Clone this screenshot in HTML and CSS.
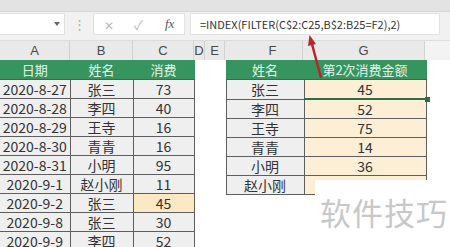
FILE: index.html
```html
<!DOCTYPE html>
<html>
<head>
  <meta charset="utf-8">
  <link rel="stylesheet" href="styles.css">
</head>
<body>
  <div class="topbar"></div>

  <div class="formula-bar">
    <div class="name-box"><span class="drop"></span></div>
    <div class="sep">⋮</div>
    <div class="fn-box">
      <span class="btn-x">✕</span>
      <span class="btn-ok">✓</span>
      <span class="btn-fx">fx</span>
    </div>
    <div class="formula">=INDEX(FILTER(C$2:C25,B$2:B25=F2),2)</div>
  </div>

  <div class="col-heads">
    <div>A</div>
    <div>B</div>
    <div>C</div>
    <div>D</div>
    <div>E</div>
    <div class="head-f">F</div>
    <div>G</div>
    <div class="head-rest"></div>
  </div>

  <div class="sheet">
    <table class="tbl left">
      <colgroup><col class="col-a"><col class="col-b"><col class="col-c"></colgroup>
      <tr class="head"><td>日期</td><td>姓名</td><td>消费</td></tr>
      <tr><td>2020-8-27</td><td>张三</td><td>73</td></tr>
      <tr><td>2020-8-28</td><td>李四</td><td>40</td></tr>
      <tr><td>2020-8-29</td><td>王寺</td><td>16</td></tr>
      <tr><td>2020-8-30</td><td>青青</td><td>16</td></tr>
      <tr><td>2020-8-31</td><td>小明</td><td>95</td></tr>
      <tr><td>2020-9-1</td><td>赵小刚</td><td>11</td></tr>
      <tr><td>2020-9-2</td><td>张三</td><td class="hit">45</td></tr>
      <tr><td>2020-9-8</td><td>张三</td><td>30</td></tr>
      <tr><td>2020-9-9</td><td>李四</td><td>52</td></tr>
    </table>

    <div class="spacer"></div>

    <table class="tbl right">
      <colgroup><col class="col-f"><col class="col-g"></colgroup>
      <tr class="head"><td>姓名</td><td>第2次消费金额</td></tr>
      <tr><td>张三</td><td class="amt selected">45<span class="handle"></span></td></tr>
      <tr><td>李四</td><td class="amt">52</td></tr>
      <tr><td>王寺</td><td class="amt">75</td></tr>
      <tr><td>青青</td><td class="amt">14</td></tr>
      <tr><td>小明</td><td class="amt">36</td></tr>
      <tr><td>赵小刚</td><td class="amt"></td></tr>
    </table>
  </div>

  <!-- red pointer drawn on top of the screenshot -->
  <svg class="arrow" width="450" height="247" viewBox="0 0 450 247">
    <line x1="321" y1="78" x2="312" y2="44" stroke="#b8262b" stroke-width="2.5"/>
    <polygon points="309.5,35 316,44 308,46" fill="#b8262b"/>
  </svg>

  <div class="watermark">软件技巧</div>
</body>
</html>
```

FILE: styles.css
```css
* {
  margin: 0;
  padding: 0;
  box-sizing: border-box;
}

body {
  width: 450px;
  height: 247px;
  overflow: hidden;
  position: relative;
  background-color: white;
  font-family: "Noto Sans CJK SC", "Noto Sans", sans-serif;
  color: #333;
}

.topbar {
  height: 12px;
  background-color: #e3e3e3;
  border-bottom: 1px solid #d6d6d6;
}

.formula-bar {
  height: 28px;
  display: flex;
  align-items: flex-start;
  padding-top: 1px;
  background-color: #f1f1f1;
}

.name-box {
  width: 65px;
  height: 22px;
  background-color: white;
  border: 1px solid #e2e2e2;
  border-left: none;
  position: relative;
}

.drop {
  position: absolute;
  left: 54px;
  top: 8px;
  border-left: 3px solid transparent;
  border-right: 3px solid transparent;
  border-top: 4px solid #666;
}

.sep {
  width: 28px;
  height: 22px;
  text-align: center;
  font-size: 13px;
  line-height: 22px;
  color: #b0b0b0;
}

.fn-box {
  width: 92px;
  height: 22px;
  background-color: white;
  border: 1px solid #e2e2e2;
  display: flex;
  align-items: center;
  color: #b8b8b8;
  font-size: 12px;
}

.btn-x {
  margin-left: 10px;
}

.btn-ok {
  margin-left: 20px;
  font-size: 13px;
}

.btn-fx {
  margin-left: 22px;
  font-family: "Liberation Serif", serif;
  font-style: italic;
  font-size: 13px;
  color: #555;
}

.formula {
  margin-left: 5px;
  width: 250px;
  height: 22px;
  background-color: white;
  border: 1px solid #e2e2e2;
  padding-left: 9px;
  font-size: 11px;
  line-height: 20px;
  color: #333;
  white-space: nowrap;
}

.col-heads {
  height: 20px;
  display: grid;
  grid-template-columns: 70px 63px 61px 11px 20px 78px 122px 1fr;
  background-color: #e9e9e9;
  border-top: 1px solid #dcdcdc;
}

.col-heads div {
  text-align: center;
  font-family: "Liberation Sans", sans-serif;
  font-size: 13px;
  line-height: 19px;
  color: #4a4a4a;
  border-right: 1px solid #d2d2d2;
}

.col-heads .head-f {
  padding-left: 18px;
}

.col-heads .head-rest {
  background-color: #f3f3f3;
  border-right: none;
}

.sheet {
  display: flex;
  align-items: flex-start;
}

.spacer {
  width: 31px;
}

.tbl {
  border-collapse: collapse;
  table-layout: fixed;
}

.tbl.left {
  width: 194px;
}

.tbl.right {
  width: 200px;
}

.col-a { width: 70px; }
.col-b { width: 63px; }
.col-c { width: 61px; }
.col-f { width: 78px; }
.col-g { width: 122px; }

.tbl td {
  height: 19px;
  padding: 0;
  border: 1px solid #5e5e5e;
  background-color: #efefef;
  text-align: center;
  font-size: 14px;
  line-height: 18px;
  color: #333;
  white-space: nowrap;
  overflow: hidden;
}

.tbl.left td:first-child {
  border-left: none;
}

.tbl .head td {
  background-color: #36955f;
  border-color: #36955f;
  border-bottom-color: #4d5f54;
  color: #e4f3e9;
  font-size: 13px;
}

.tbl td.hit {
  background-color: #fce8c2;
}

.tbl td.amt {
  background-color: #fcefd6;
}

.tbl td.selected {
  position: relative;
  overflow: visible;
  border-bottom: 2px solid #2a6e45;
}

.handle {
  position: absolute;
  right: -4px;
  bottom: -4px;
  width: 5px;
  height: 5px;
  background-color: #2a6e45;
}

.arrow {
  position: absolute;
  left: 0;
  top: 0;
  pointer-events: none;
}

.watermark {
  position: absolute;
  left: 315px;
  top: 180px;
  right: 0;
  bottom: 0;
  background-color: white;
  padding: 16px 0 0 5px;
  font-size: 31px;
  line-height: 31px;
  letter-spacing: 1px;
  color: #c8c8c8;
  white-space: nowrap;
}
```
